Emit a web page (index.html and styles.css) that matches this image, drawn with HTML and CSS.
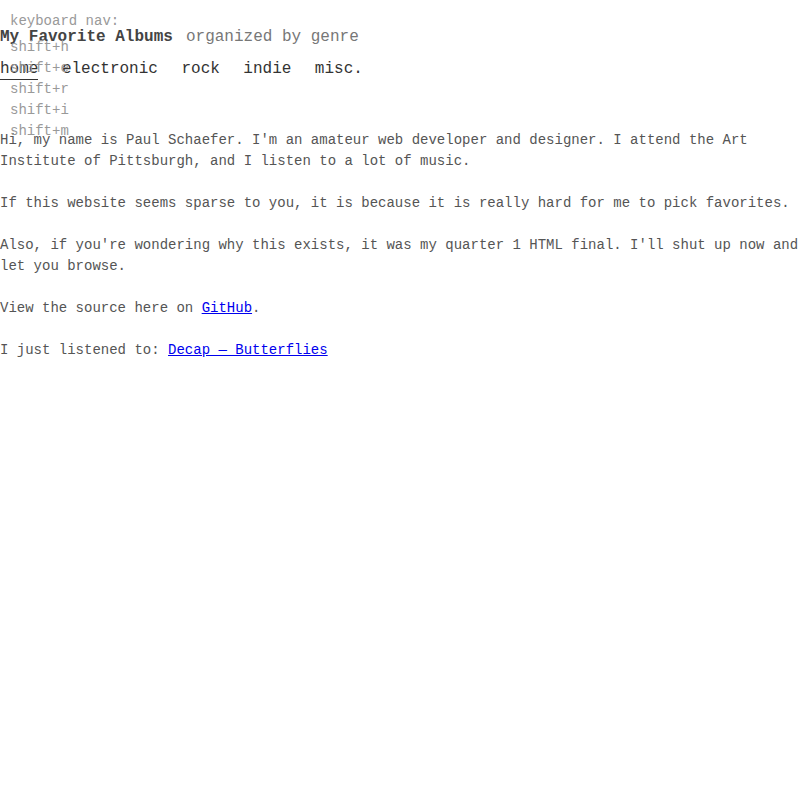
FILE: index.html
```html
<!DOCTYPE html>
<html lang="en">
<head>
<meta charset="utf-8">
<title>My Favorite Albums</title>
<link rel="stylesheet" href="styles.css">
</head>
<body>
<header class="site-header">
  <h1 class="title">My Favorite Albums <span class="subtitle">organized by genre</span></h1>
  <nav class="nav">
    <a class="nav-link active" href="#">home</a>
    <a class="nav-link" href="#">electronic</a>
    <a class="nav-link" href="#">rock</a>
    <a class="nav-link" href="#">indie</a>
    <a class="nav-link" href="#">misc.</a>
  </nav>
</header>
<main class="content">
  <p>Hi, my name is Paul Schaefer. I'm an amateur web developer and designer. I attend the Art Institute of Pittsburgh, and I listen to a lot of music.</p>
  <p>If this website seems sparse to you, it is because it is really hard for me to pick favorites.</p>
  <p>Also, if you're wondering why this exists, it was my quarter 1 HTML final. I'll shut up now and let you browse.</p>
  <p>View the source here on <a href="#">GitHub</a>.</p>
  <p>I just listened to: <a href="#">Decap — Butterflies</a></p>
</main>
<aside class="keynav">
  <div class="keynav-title">keyboard nav:</div>
  <ul class="keynav-list">
    <li>shift+h</li>
    <li>shift+e</li>
    <li>shift+r</li>
    <li>shift+i</li>
    <li>shift+m</li>
  </ul>
</aside>
</body>
</html>
```
FILE: styles.css
```css
html, body {
  margin: 0;
  padding: 0;
  background: #fff;
}
body {
  font-family: "Liberation Mono", "DejaVu Sans Mono", monospace;
  font-size: 14px;
  line-height: 21px;
  color: #555;
}
.site-header {
  padding-top: 25px;
}
.title {
  margin: 0;
  font-size: 16px;
  line-height: 24px;
  font-weight: bold;
  color: #444;
}
.subtitle {
  font-weight: normal;
  color: #777;
  margin-left: 3.5px;
}
.nav {
  display: flex;
  align-items: flex-start;
  gap: 23.5px;
  margin-top: 9px;
  padding-top: 1px;
  height: 23px;
  font-size: 16px;
}
.nav-link {
  color: #333;
  text-decoration: none;
  line-height: 20px;
}
.nav-link.active {
  border-bottom: 1px solid #333;
}
.content {
  margin-top: 48px;
}
.content p {
  margin: 0 0 21px;
}
.content a {
  color: #0000ee;
}
.keynav {
  position: absolute;
  top: 11px;
  left: 10px;
  color: #999;
  font-size: 14px;
  line-height: 21px;
}
.keynav-list {
  list-style: none;
  margin: 5px 0 0;
  padding: 0;
}
```
